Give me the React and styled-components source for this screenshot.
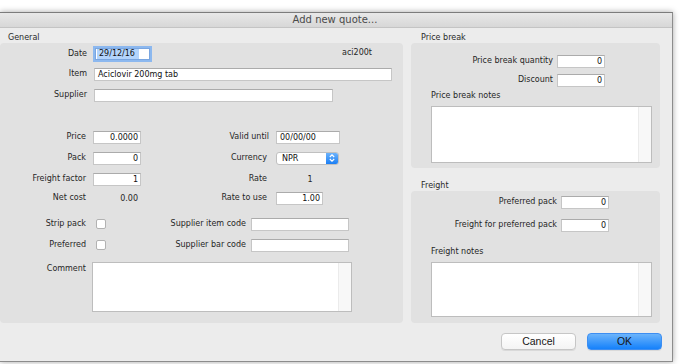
import React from 'react';
import styled, { createGlobalStyle } from 'styled-components';

const Global = createGlobalStyle`
  html, body { margin: 0; padding: 0; background: #ffffff; height: 364px; overflow: hidden; }
  body { font-family: "DejaVu Sans", "Noto Sans", sans-serif; font-size: 8px; color: #262626; }
  * { box-sizing: border-box; }
`;

const Dialog = styled.div`
  margin-top: 12px;
  width: 673px;
  height: 350px;
  background: #ececec;
  border-top: 1px solid #7c7c7c;
  border-right: 1px solid #8c8c8c;
  border-bottom: 1px solid #8c8c8c;
  box-shadow: 0 0 6px rgba(0, 0, 0, 0.35);
  display: flex;
  flex-direction: column;
`;

const TitleBar = styled.div`
  height: 15px;
  border-bottom: 1px solid #c4c4c4;
  background: linear-gradient(#e8e8e8, #d7d7d7);
  text-align: center;
  font-size: 10px;
  line-height: 14px;
  color: #4a4a4a;
  padding-right: 2px;
`;

const Body = styled.div`
  display: flex;
  gap: 8px;
  padding-right: 12px;
`;

const Column = styled.div`
  width: ${(p) => p.$w}px;
  display: flex;
  flex-direction: column;
`;

const SectionTitle = styled.div`
  padding-top: ${(p) => p.$top}px;
  padding-left: ${(p) => p.$left}px;
  line-height: 10px;
  color: #2a2a2a;
`;

const Panel = styled.div`
  background: #e1e1e1;
  border-radius: 4px;
  display: flex;
  flex-direction: column;
  padding: ${(p) => p.$pad};
  flex: ${(p) => (p.$grow ? 1 : 'none')};
`;

const Row = styled.div`
  display: flex;
  align-items: ${(p) => p.$align || 'center'};
  justify-content: ${(p) => p.$justify || 'flex-start'};
  height: ${(p) => p.$h || 20}px;
  margin-top: ${(p) => p.$mt || 0}px;
  padding-right: ${(p) => p.$pr || 0}px;
`;

const Label = styled.div`
  width: ${(p) => (p.$w ? `${p.$w}px` : 'auto')};
  flex-shrink: 0;
  text-align: right;
  margin-right: ${(p) => p.$gap ?? 6}px;
  padding-top: ${(p) => p.$pt || 0}px;
  white-space: nowrap;
  line-height: 10px;
  color: #262626;
`;

const Field = styled.div`
  width: ${(p) => p.$w}px;
  height: 13px;
  flex-shrink: 0;
  margin-left: ${(p) => p.$ml || 0}px;
  background: #ffffff;
  border: 1px solid #c6c6c6;
  border-top-color: #ababab;
  text-align: ${(p) => p.$align || 'left'};
  padding: 0 2px 0 3px;
  line-height: 11px;
  color: #111111;
  white-space: nowrap;
  overflow: hidden;
`;

const DateField = styled(Field)`
  height: 12px;
  border-color: #7aa6e0;
  box-shadow: 0 0 0 2px #8cb8ef;
  padding-left: 1px;
  line-height: 10px;
`;

const Selection = styled.span`
  display: inline-block;
  background: #b3d4fc;
  padding: 0 2px;
  width: 42px;
`;

const Code = styled.div`
  margin-left: auto;
  margin-right: 31px;
  margin-top: -3px;
  color: #262626;
`;

const Value = styled.div`
  width: ${(p) => p.$w}px;
  text-align: ${(p) => p.$align};
  padding: ${(p) => p.$pad || '0'};
  flex-shrink: 0;
  color: #262626;
`;

const Check = styled.div`
  width: 10px;
  height: 10px;
  flex-shrink: 0;
  margin-left: ${(p) => p.$ml || 0}px;
  background: #ffffff;
  border: 1px solid #b2b2b2;
  border-radius: 2px;
`;

const Select = styled.div`
  width: 63px;
  height: 13px;
  margin-left: 1px;
  display: flex;
  background: #ffffff;
  border: 1px solid #c0c0c0;
  border-radius: 3px;
  overflow: hidden;
  line-height: 11px;
`;

const SelectText = styled.span`
  padding-left: 5px;
  color: #111111;
`;

const Stepper = styled.span`
  margin-left: auto;
  width: 12px;
  height: 100%;
  display: flex;
  align-items: center;
  justify-content: center;
  background: linear-gradient(#6db3fb, #1b7ff5);
`;

const TextBox = styled.div`
  width: ${(p) => p.$w}px;
  height: ${(p) => p.$h}px;
  margin-left: ${(p) => p.$ml || 0}px;
  margin-top: ${(p) => p.$mt || 0}px;
  display: flex;
  background: #ffffff;
  border: 1px solid #bdbdbd;
  flex-shrink: 0;
`;

const Track = styled.div`
  margin-left: auto;
  width: 13px;
  background: #f8f8f8;
  border-left: 1px solid #ebebeb;
`;

const NotesLabel = styled.div`
  line-height: 12px;
  margin-top: ${(p) => p.$mt}px;
  padding-left: 20px;
  color: #262626;
`;

const Footer = styled.div`
  display: flex;
  justify-content: flex-end;
  gap: 11px;
  padding: 10px 10px 0 0;
`;

const Button = styled.button`
  width: 75px;
  height: 17px;
  padding: 0;
  border-radius: 4px;
  font-family: "Liberation Sans", Arial, sans-serif;
  font-size: 10.5px;
  line-height: 15px;
  color: #151515;
  border: 1px solid ${(p) => (p.$primary ? '#3d8ef2' : '#c6c6c6')};
  background: ${(p) =>
    p.$primary ? 'linear-gradient(#6cb4fb, #1581fb)' : 'linear-gradient(#ffffff, #f4f4f4)'};
  box-shadow: 0 1px 0 rgba(0, 0, 0, 0.08);
`;

function Chevrons() {
  return (
    <svg width="8" height="10" viewBox="0 0 8 10">
      <path d="M1.8 4 L4 1.8 L6.2 4" fill="none" stroke="#fff" strokeWidth="1.1" />
      <path d="M1.8 6 L4 8.2 L6.2 6" fill="none" stroke="#fff" strokeWidth="1.1" />
    </svg>
  );
}

export default function App() {
  return (
    <>
      <Global />
      <Dialog>
        <TitleBar>Add new quote...</TitleBar>
        <Body>
          <Column $w={403}>
            <SectionTitle $top={5} $left={8}>General</SectionTitle>
            <Panel $grow $pad="1px 0 0 0">
              <Row>
                <Label $w={87} $gap={8}>Date</Label>
                <DateField $w={55}>
                  <Selection>29/12/16</Selection>
                </DateField>
                <Code>aci200t</Code>
              </Row>
              <Row>
                <Label $w={87} $gap={7}>Item</Label>
                <Field $w={298}>Aciclovir 200mg tab</Field>
              </Row>
              <Row $mt={1}>
                <Label $w={87} $gap={7}>Supplier</Label>
                <Field $w={239}></Field>
              </Row>

              <Row $mt={22}>
                <Label $w={86} $gap={7}>Price</Label>
                <Field $w={48} $align="right">0.0000</Field>
                <Label $w={128} $gap={7}>Valid until</Label>
                <Field $w={64}>00/00/00</Field>
              </Row>
              <Row $mt={1}>
                <Label $w={86} $gap={7}>Pack</Label>
                <Field $w={48} $align="right">0</Field>
                <Label $w={126} $gap={8}>Currency</Label>
                <Select>
                  <SelectText>NPR</SelectText>
                  <Stepper>
                    <Chevrons />
                  </Stepper>
                </Select>
              </Row>
              <Row $mt={1}>
                <Label $w={86} $gap={7}>Freight factor</Label>
                <Field $w={48} $align="right">1</Field>
                <Label $w={126} $gap={9}>Rate</Label>
                <Value $w={64} $align="center" $pad="0 0 0 4px">1</Value>
              </Row>
              <Row $h={18}>
                <Label $w={86} $gap={7}>Net cost</Label>
                <Value $w={48} $align="right" $pad="0 3px 0 0">0.00</Value>
                <Label $w={126} $gap={9}>Rate to use</Label>
                <Field $w={47} $align="right">1.00</Field>
              </Row>

              <Row $mt={7}>
                <Label $w={86} $gap={0}>Strip pack</Label>
                <Check $ml={10} />
                <Label $w={140} $gap={5}>Supplier item code</Label>
                <Field $w={98}></Field>
              </Row>
              <Row $mt={1}>
                <Label $w={86} $gap={0}>Preferred</Label>
                <Check $ml={10} />
                <Label $w={140} $gap={5}>Supplier bar code</Label>
                <Field $w={98}></Field>
              </Row>
              <Row $mt={7} $h={50} $align="flex-start">
                <Label $w={86} $gap={6} $pt={2}>Comment</Label>
                <TextBox $w={260} $h={50}>
                  <Track />
                </TextBox>
              </Row>
            </Panel>
          </Column>

          <Column $w={249}>
            <SectionTitle $top={5} $left={10}>Price break</SectionTitle>
            <Panel $pad="9px 8px 5px 0">
              <Row $h={18} $justify="flex-end" $pr={47}>
                <Label $gap={4}>Price break quantity</Label>
                <Field $w={48} $align="right">0</Field>
              </Row>
              <Row $h={18} $mt={1} $justify="flex-end" $pr={47}>
                <Label $gap={4}>Discount</Label>
                <Field $w={48} $align="right">0</Field>
              </Row>
              <NotesLabel $mt={1}>Price break notes</NotesLabel>
              <TextBox $w={221} $h={57} $ml={20} $mt={4}>
                <Track />
              </TextBox>
            </Panel>

            <SectionTitle $top={13} $left={10}>Freight</SectionTitle>
            <Panel $pad="2px 8px 6px 0">
              <Row $h={18} $justify="flex-end" $pr={43}>
                <Label $gap={4}>Preferred pack</Label>
                <Field $w={48} $align="right">0</Field>
              </Row>
              <Row $h={18} $mt={5} $justify="flex-end" $pr={43}>
                <Label $gap={4}>Freight for preferred pack</Label>
                <Field $w={48} $align="right">0</Field>
              </Row>
              <NotesLabel $mt={12}>Freight notes</NotesLabel>
              <TextBox $w={221} $h={55} $ml={20} $mt={4}>
                <Track />
              </TextBox>
            </Panel>
          </Column>
        </Body>
        <Footer>
          <Button>Cancel</Button>
          <Button $primary>OK</Button>
        </Footer>
      </Dialog>
    </>
  );
}
